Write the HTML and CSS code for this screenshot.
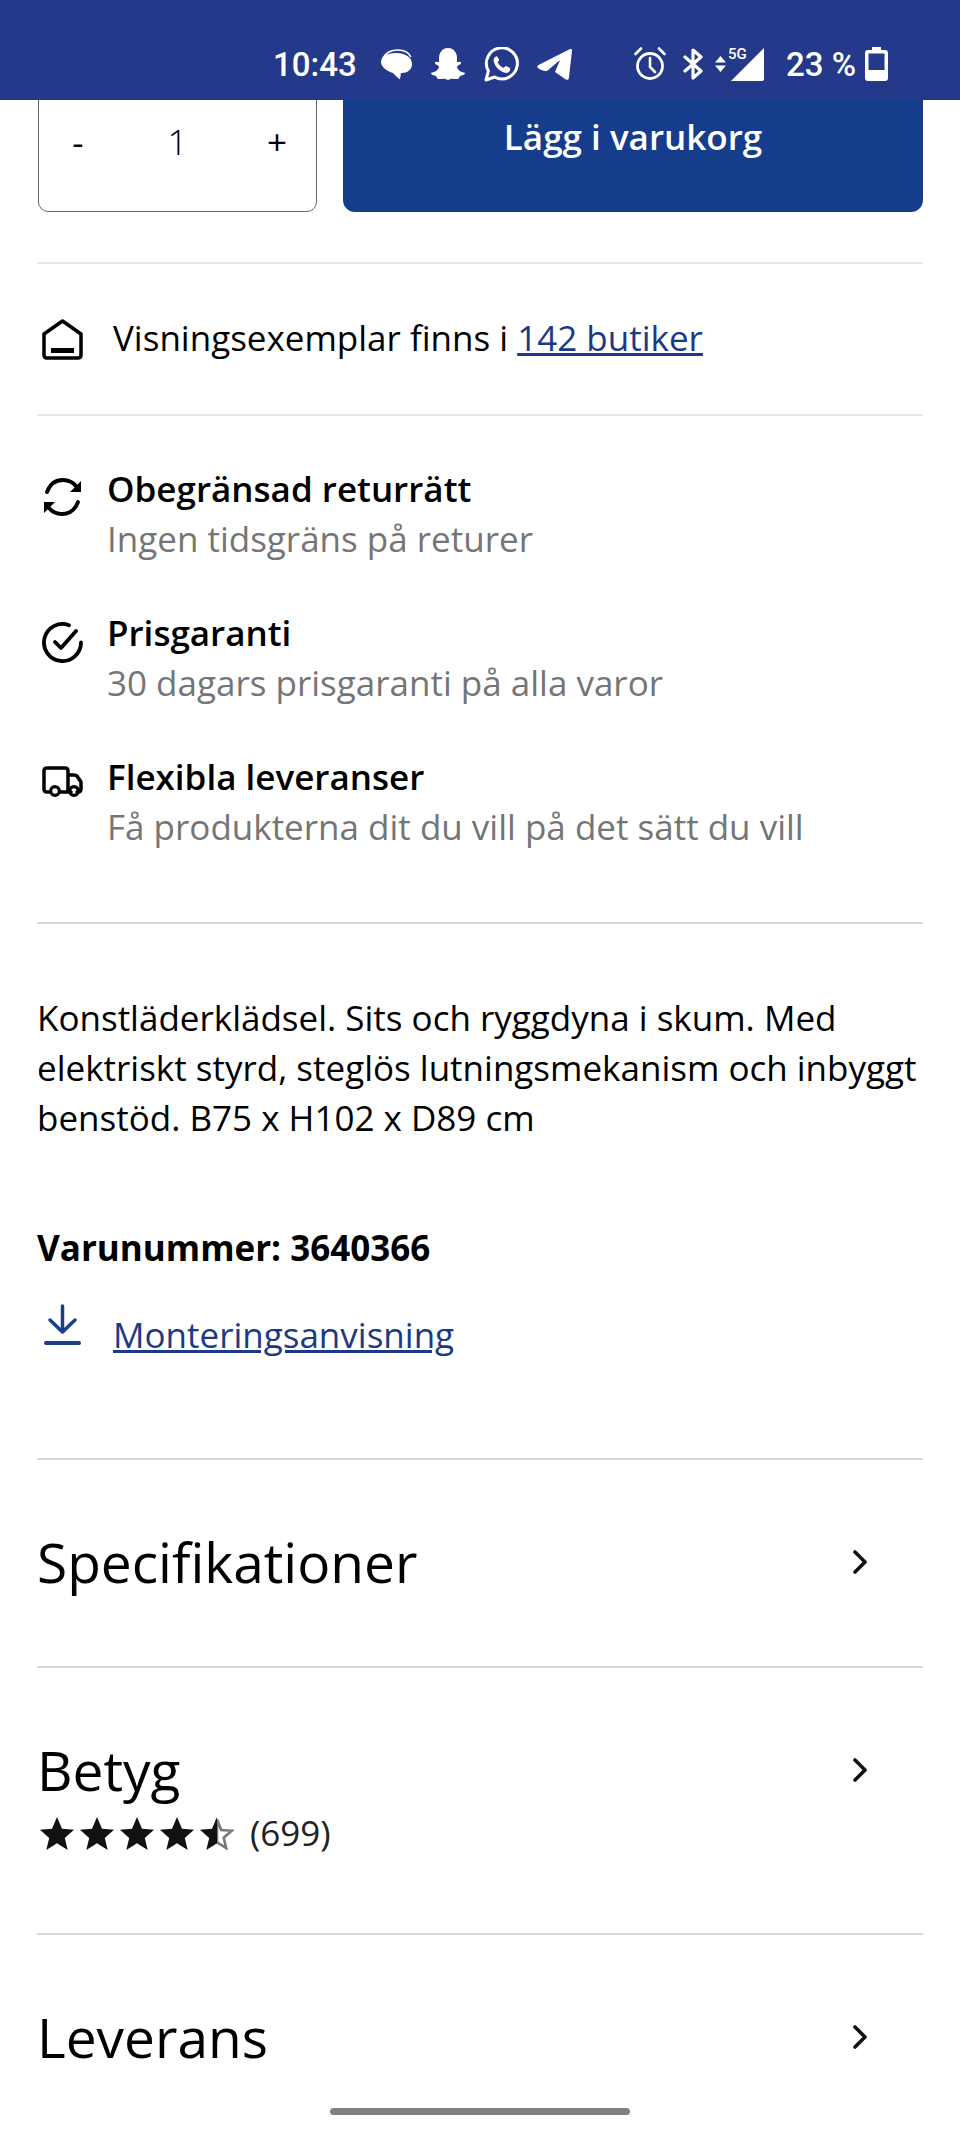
FILE: index.html
```html
<!DOCTYPE html>
<html lang="sv">
<head>
<meta charset="utf-8">
<title>Produkt</title>
<link rel="stylesheet" href="styles.css">
</head>
<body>
<div class="phone">
  <header class="statusbar">
    <span class="time">10:43</span>
    <div class="notif">
      <svg width="32" height="30" viewBox="0 0 32 30"><path d="M3 9C6 3 12 1 18 1c6 0 11 3 13 7" fill="none" stroke="#fff" stroke-width="1.6"/><path d="M16 4c9 0 16 4 16 11 0 6-5 9-10 9h-1l-1 6c-1 0-3-2-7-6C7 22 1 18 1 13c0-6 7-9 15-9z" fill="#fff"/></svg>
      <svg width="36" height="32" viewBox="0 0 36 32"><path d="M18 0c6 0 9 5 9 10v4c2 0 4-1 4 1s-4 2-4 4c1 4 5 5 8 6 0 2-3 2-5 3-1 2-1 3-3 3-3 0-5-1-9 1-4-2-6-1-9-1-2 0-2-1-3-3-2-1-5-1-5-3 3-1 7-2 8-6 0-2-4-2-4-4s2-1 4-1v-4C9 5 12 0 18 0z" fill="#fff"/></svg>
      <svg width="35" height="35" viewBox="0 0 35 35"><path d="M2 33l2.400-9A15.500 15.500 0 1 1 10.500 30z" fill="none" stroke="#fff" stroke-width="3" stroke-linejoin="round"/><path d="M12 9.500c-2 1-3 3-2 6 2 5 5 8 10 10 3 1 5 0 6-2 .5-1.500 0-2.500-1-3l-3-1.500c-1 0-1.500 1-2.500 2-2.500-1-4.500-3-6-6 1-1 2-1.500 1.500-2.500L13.500 10c-.5-.8-1-.8-1.500-.5z" fill="#fff"/></svg>
      <svg width="35" height="31" viewBox="0 0 35 31"><path d="M33 0c2-.5 2 1 2 2l-3 26c0 3-2 3.500-4 2l-10-7 5-12-13 11c-3 .5-6-1-9-3-1-1-1-2 .5-3z" fill="#fff"/></svg>
    </div>
    <div class="sys">
      <svg class="i-alarm" width="32" height="34" viewBox="0 0 32 34"><circle cx="16" cy="19" r="12.500" fill="none" stroke="#fff" stroke-width="2.800"/><path d="M16 11v9l5 5M1.500 7L7 1.500M30.500 7L25 1.500" fill="none" stroke="#fff" stroke-width="2.600" stroke-linecap="round"/></svg>
      <svg class="i-bt" width="21" height="32" viewBox="0 0 21 32"><path d="M2 9l16 14-8 7V2l8 7L2 23" fill="none" stroke="#fff" stroke-width="3.200" stroke-linejoin="round" stroke-linecap="round"/></svg>
      <div class="net">
        <svg class="arrows" width="11" height="16" viewBox="0 0 11 16"><path d="M5.500 0L11 6.500H0zM5.500 16L0 9.500H11z" fill="#fff"/></svg>
        <span class="five">5G</span>
        <svg class="signal" width="33" height="33" viewBox="0 0 33 33"><path d="M33 0v31q0 2-2 2H0z" fill="#fff"/></svg>
      </div>
      <span class="batt-text">23 %</span>
      <svg class="i-batt" width="23" height="34" viewBox="0 0 23 34"><path d="M7 0h9v3h4q3 0 3 3v25q0 3-3 3H3q-3 0-3-3V6q0-3 3-3h4z" fill="#fff"/><rect x="3.500" y="6.500" width="16" height="16.500" fill="#25398a"/></svg>
    </div>
  </header>

  <main class="content">
    <div class="buy-row">
      <div class="qty"><span class="q-sign">-</span><span class="q-num">1</span><span class="q-sign">+</span></div>
      <button class="cart">Lägg i varukorg</button>
    </div>

    <section class="store">
      <svg width="41" height="41" viewBox="0 0 41 41"><path d="M20.500 2L39 15v21q0 3-3 3H5q-3 0-3-3V15z" fill="none" stroke="#000" stroke-width="3.500" stroke-linejoin="round"/><path d="M9 31.500h23" stroke="#000" stroke-width="5"/></svg>
      <p class="store-text">Visningsexemplar finns i <a href="#">142 butiker</a></p>
    </section>

    <section class="perks">
      <div class="perk">
        <svg width="41" height="38" viewBox="0 0 41 38"><path d="M5 14C8 6 14 2 21 2c6 0 10 2 14 7M36 24c-3 8-9 12-16 12-6 0-10-2-14-7" fill="none" stroke="#000" stroke-width="3.800" stroke-linecap="round"/><path d="M39 3v11H28zM2 35V24h11z" fill="#000"/></svg>
        <div><h3 class="perk-title">Obegränsad returrätt</h3><p class="perk-sub">Ingen tidsgräns på returer</p></div>
      </div>
      <div class="perk">
        <svg width="41" height="41" viewBox="0 0 41 41"><path d="M39 20.500A18.500 18.500 0 1 1 27 3.200M13 20l6 6L34 9" fill="none" stroke="#000" stroke-width="3.800" stroke-linecap="round" stroke-linejoin="round"/></svg>
        <div><h3 class="perk-title">Prisgaranti</h3><p class="perk-sub">30 dagars prisgaranti på alla varor</p></div>
      </div>
      <div class="perk">
        <svg width="41" height="31" viewBox="0 0 41 31"><path d="M7 26H5q-3 0-3-3V5q0-3 3-3h18q3 0 3 3v21h-8M26 9h6q2 0 3 1l4 6v7q0 3-3 3h-1M26 26h3" fill="none" stroke="#000" stroke-width="3.500" stroke-linejoin="round" stroke-linecap="round"/><circle cx="13" cy="25" r="4.300" fill="none" stroke="#000" stroke-width="3.200"/><circle cx="32" cy="25" r="4.300" fill="none" stroke="#000" stroke-width="3.200"/></svg>
        <div><h3 class="perk-title">Flexibla leveranser</h3><p class="perk-sub">Få produkterna dit du vill på det sätt du vill</p></div>
      </div>
    </section>

    <section class="info">
      <p class="desc">Konstläderklädsel. Sits och ryggdyna i skum. Med elektriskt styrd, steglös lutningsmekanism och inbyggt benstöd. B75 x H102 x D89 cm</p>
      <p class="sku">Varunummer: 3640366</p>
      <div class="manual">
        <svg width="37" height="41" viewBox="0 0 37 41"><path d="M18.500 2v25M6 16l12.500 12L31 16" fill="none" stroke="#1a3d8c" stroke-width="3.500" stroke-linecap="round" stroke-linejoin="round"/><path d="M2 39h33" stroke="#1a3d8c" stroke-width="4" stroke-linecap="round"/></svg>
        <a href="#">Monteringsanvisning</a>
      </div>
    </section>

    <section class="acc acc-spec">
      <div class="acc-head"><h2>Specifikationer</h2><svg class="chev" width="14" height="24" viewBox="0 0 14 24"><path d="M2 2l10 10L2 22" fill="none" stroke="#111" stroke-width="3.600" stroke-linecap="round" stroke-linejoin="round"/></svg></div>
    </section>
    <section class="acc acc-rate">
      <div class="acc-head"><h2>Betyg</h2><svg class="chev" width="14" height="24" viewBox="0 0 14 24"><path d="M2 2l10 10L2 22" fill="none" stroke="#111" stroke-width="3.600" stroke-linecap="round" stroke-linejoin="round"/></svg></div>
      <div class="rating">
        <svg width="196" height="33" viewBox="0 0 196 33">
          <defs><path id="st" d="M17 0l5 11.800 12 1-9.200 8.200 2.900 12L17 26.300 6.300 33l2.900-12L0 12.800l12-1z"/></defs>
          <use href="#st" fill="#111"/><use href="#st" x="40" fill="#111"/><use href="#st" x="80" fill="#111"/><use href="#st" x="120" fill="#111"/>
          <path d="M177 2.500l4.200 10.500 10.500.8-8 7 2.500 10.300-9.200-5.700z" fill="none" stroke="#777" stroke-width="2.600"/>
          <path d="M177 0l-5 11.800-12 1 9.200 8.200-2.900 12 10.700-6.700z" fill="#111"/>
        </svg>
        <span>(699)</span>
      </div>
    </section>
    <section class="acc acc-last">
      <div class="acc-head"><h2>Leverans</h2><svg class="chev" width="14" height="24" viewBox="0 0 14 24"><path d="M2 2l10 10L2 22" fill="none" stroke="#111" stroke-width="3.600" stroke-linecap="round" stroke-linejoin="round"/></svg></div>
    </section>
  </main>
  <div class="home-pill"></div>
</div>
</body>
</html>
```
FILE: styles.css
```css
* { box-sizing: border-box; }
html, body { margin: 0; padding: 0; background: #fff; }
body { font-family: "Open Sans", sans-serif; color: #000; }
h2, h3, p { margin: 0; font-weight: 400; }
svg { display: block; flex: none; }

.phone { position: relative; width: 960px; height: 2133px; overflow: hidden; }

.statusbar {
  position: relative; z-index: 2;
  display: flex; align-items: center;
  height: 100px; padding: 28px 0 0 273px;
  background: #25398a; color: #fff;
  font-family: Roboto, sans-serif; font-weight: 500; font-size: 33px;
}
.time { width: 82px; }
.notif { display: flex; align-items: center; gap: 18px; margin-left: 25px; }
.sys { display: flex; align-items: center; margin-left: 62px; }
.i-bt { margin-left: 17px; }
.net { position: relative; width: 49px; height: 33px; margin-left: 11px; }
.arrows { position: absolute; left: 0; top: 8px; }
.five { position: absolute; left: 13px; top: -2px; font-size: 15px; line-height: 16px; }
.signal { position: absolute; left: 16px; top: 0; }
.batt-text { margin-left: 22px; width: 69px; white-space: nowrap; }
.i-batt { margin-left: 10px; }

.content { padding: 0 37px; }

.buy-row { display: flex; gap: 26px; margin-top: -40px; padding: 0 0 50px 1px; border-bottom: 2px solid #e6e6e6; }
.qty {
  display: flex; justify-content: space-between; align-items: flex-start;
  width: 279px; height: 152px; padding: 56px 29px 0;
  border: 1.500px solid #666; border-radius: 10px; font-size: 35px; line-height: 50px;
}
.q-sign { width: 20px; text-align: center; }
.q-num { font-weight: 300; }
.cart {
  flex: 1; height: 152px; padding: 0; border: 0; border-radius: 12px;
  background: #163c8c; color: #fff;
  font: 600 35px "Open Sans", sans-serif;
}

.store {
  display: flex; align-items: center; gap: 30px;
  height: 152px; padding-left: 5px; border-bottom: 2px solid #e6e6e6;
}
.store-text { padding-bottom: 3px; font-size: 35px; line-height: 50px; }
a { color: #1a3a83; }

.perks { display: flex; flex-direction: column; gap: 44px; padding: 48px 0 70px; border-bottom: 2px solid #d9d9d9; }
.perk { display: flex; gap: 24px; padding-left: 5px; }
.perk svg { margin-top: 14px; }
.perk-title { font-size: 35px; line-height: 50px; font-weight: 600; }
.perk-sub { font-size: 35px; line-height: 50px; color: #757575; }

.info { padding: 69px 0 0; }
.desc { font-size: 35px; line-height: 50px; }
.sku { margin-top: 80px; font-size: 35px; line-height: 50px; font-weight: 700; }
.manual { display: flex; gap: 32px; align-items: flex-start; margin-top: 31px; padding-left: 7px; font-size: 35px; line-height: 50px; }
.manual a { margin-top: 6px; }

.acc { border-top: 2px solid #d9d9d9; }
.acc-spec { margin-top: 98px; height: 208px; }
.acc-rate { height: 267px; }
.acc-head { display: flex; justify-content: space-between; align-items: center; padding: 65px 56px 0 0; }
.acc-head h2 { font-size: 55px; line-height: 74px; }
.rating { display: flex; align-items: center; gap: 14px; margin-top: 1px; padding-left: 3px; font-size: 35px; line-height: 50px; color: #222; }

.home-pill {
  position: absolute; left: 330px; bottom: 18px; width: 300px; height: 7px;
  border-radius: 4px; background: #808080;
}
```
